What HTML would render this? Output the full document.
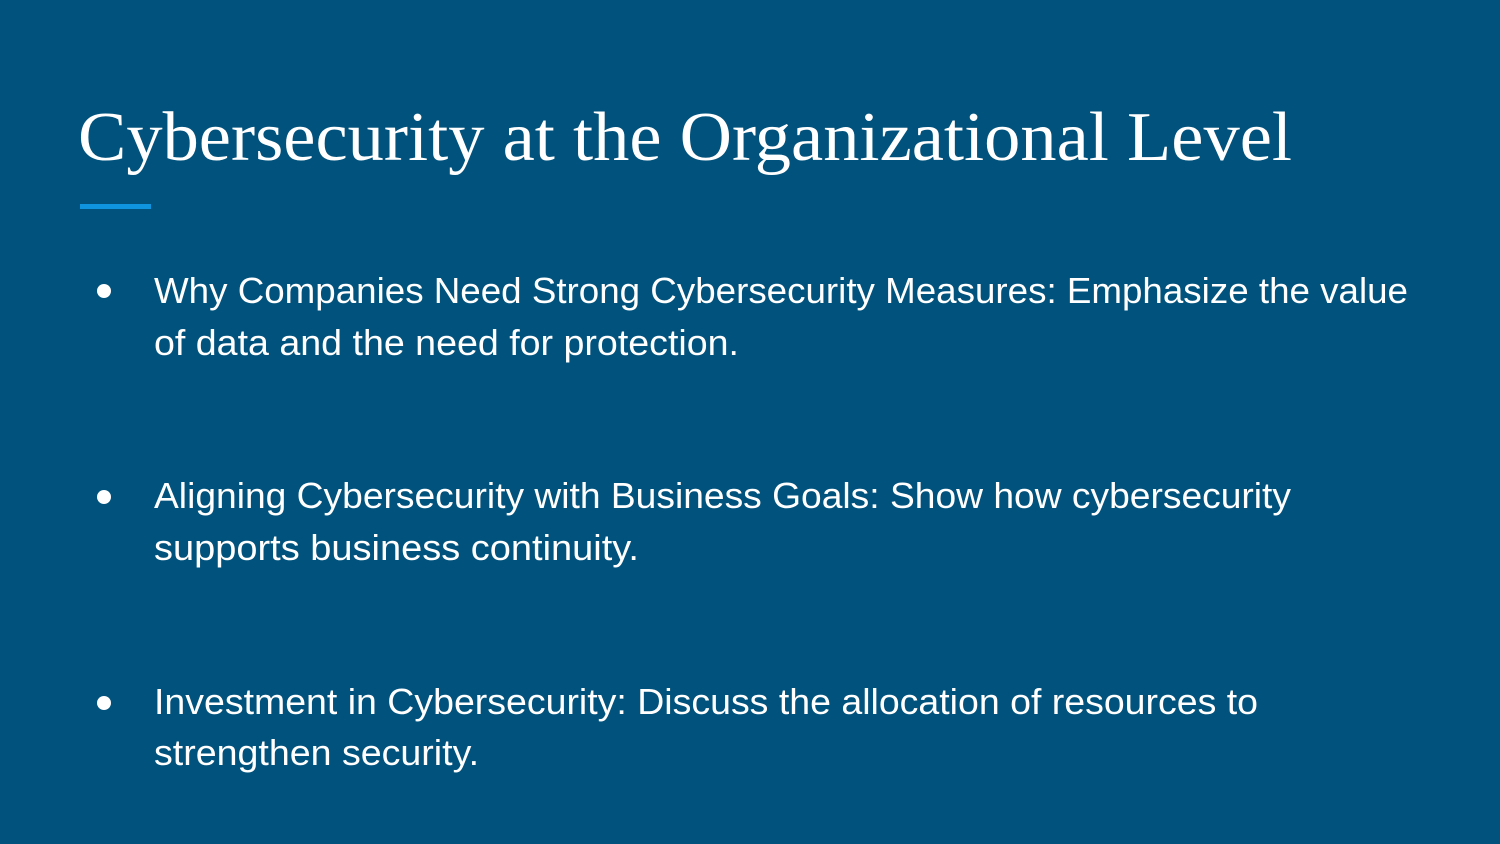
<!DOCTYPE html>
<html><head><meta charset="utf-8"><style>
html,body{margin:0;padding:0;background:#01527c;}
svg{display:block}
</style></head><body>
<svg width="1500" height="844" viewBox="0 0 1500 844" xmlns="http://www.w3.org/2000/svg">
<rect width="1500" height="844" fill="#01527c"/>
<text x="78" y="160" font-family="Liberation Serif, serif" font-size="70" fill="#fff" textLength="1214" lengthAdjust="spacingAndGlyphs">Cybersecurity at the Organizational Level</text>
<rect x="80" y="204" width="71" height="5" fill="#0f94df"/>
<g font-family="Liberation Sans, sans-serif" font-size="36" fill="#fff">
<circle cx="104" cy="291" r="7"/>
<text x="154" y="303" textLength="1254" lengthAdjust="spacingAndGlyphs">Why Companies Need Strong Cybersecurity Measures: Emphasize the value</text>
<text x="154" y="355" textLength="585" lengthAdjust="spacingAndGlyphs">of data and the need for protection.</text>
<circle cx="104" cy="497" r="7"/>
<text x="154" y="508" textLength="1137" lengthAdjust="spacingAndGlyphs">Aligning Cybersecurity with Business Goals: Show how cybersecurity</text>
<text x="154" y="560" textLength="485" lengthAdjust="spacingAndGlyphs">supports business continuity.</text>
<circle cx="104" cy="703" r="7"/>
<text x="154" y="714" textLength="1104" lengthAdjust="spacingAndGlyphs">Investment in Cybersecurity: Discuss the allocation of resources to</text>
<text x="154" y="765" textLength="325" lengthAdjust="spacingAndGlyphs">strengthen security.</text>
</g>
</svg>
</body></html>
